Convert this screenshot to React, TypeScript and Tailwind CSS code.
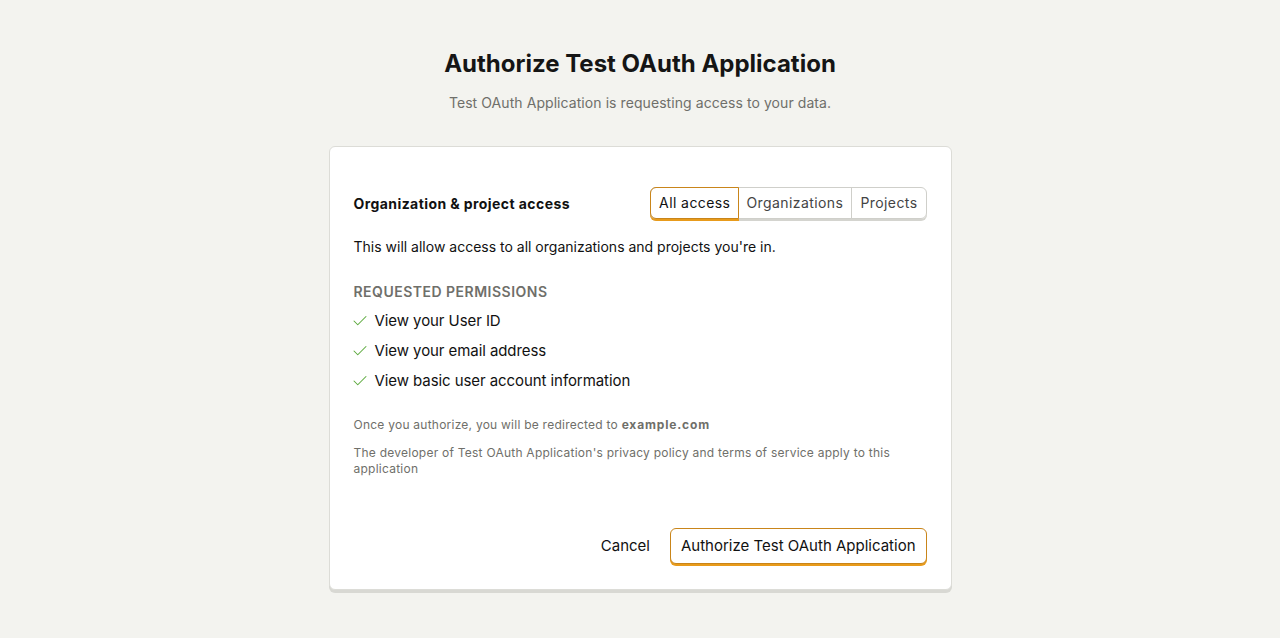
import { Check } from "lucide-react";

const permissions = [
  "View your User ID",
  "View your email address",
  "View basic user account information",
];

export default function App() {
  return (
    <div
      className="min-h-[638px] bg-[#f3f3ef] text-[#111] flex flex-col items-center"
      style={{ fontFamily: "Inter, 'Noto Sans', sans-serif" }}
    >
      <h1 className="mt-[48px] text-[24px] leading-[32px] font-bold text-[#151515]">
        Authorize Test OAuth Application
      </h1>
      <p className="mt-[13px] text-sm leading-5 tracking-[0.005em] text-[#6f6f6a]">
        Test OAuth Application is requesting access to your data.
      </p>

      <div className="mt-[33px] w-[623px] rounded-md border border-[#dcdcd7] bg-white px-6 pt-[40px] pb-[25px] shadow-[0_3px_0_#d8d8d3]">
        <div className="flex items-start justify-between">
          <div className="mt-[7px] text-sm leading-5 font-bold tracking-[0.03em]">
            Organization &amp; project access
          </div>
          <div className="flex rounded-md border border-[#cfcfca] shadow-[0_2px_0_#d4d4cf] text-sm leading-5 tracking-[0.03em]">
            <button className="rounded-l-md border border-[#c9851a] -m-px px-2 py-[5px] text-[#111] shadow-[0_2px_0_#e89b1b]">
              All access
            </button>
            <button className="px-2 py-[5px] text-[#444] border-r border-[#cfcfca]">
              Organizations
            </button>
            <button className="px-2 py-[5px] text-[#444]">Projects</button>
          </div>
        </div>

        <p className="mt-[18px] text-sm leading-5">
          This will allow access to all organizations and projects you're in.
        </p>

        <div className="mt-[25px] text-sm font-semibold uppercase tracking-[0.035em] text-[#6f6f6a] leading-5">
          Requested permissions
        </div>
        <ul className="mt-[9px] flex flex-col gap-[10px]">
          {permissions.map((p) => (
            <li key={p} className="flex items-center gap-[6px] text-[15px] leading-5 tracking-[-0.005em]">
              <Check className="-ml-[3px] h-[18px] w-[18px] text-[#5aa83a]" strokeWidth={1.4} />
              {p}
            </li>
          ))}
        </ul>

        <p className="mt-[26px] text-xs leading-4 tracking-[0.02em] text-[#6f6f6a]">
          Once you authorize, you will be redirected to{" "}
          <span className="font-bold tracking-[0.07em]">example.com</span>
        </p>
        <p className="mt-[12px] text-xs leading-4 tracking-[0.02em] text-[#6f6f6a]">
          The developer of Test OAuth Application's privacy policy and terms of service apply to this
          application
        </p>

        <div className="mt-[51px] flex items-center justify-end gap-5">
          <button className="text-[15px] leading-5 text-[#111]">Cancel</button>
          <button className="rounded-md border border-[#c9851a] bg-white px-[10px] py-[7px] text-[15px] leading-5 text-[#111] shadow-[0_2px_0_#e89b1b]">
            Authorize Test OAuth Application
          </button>
        </div>
      </div>
    </div>
  );
}
